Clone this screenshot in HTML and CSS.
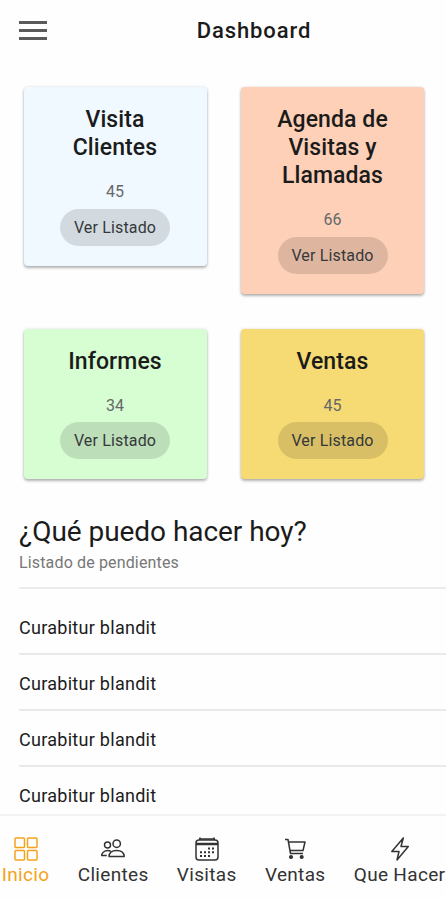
FILE: index.html
```
<!DOCTYPE html>
<html lang="es">
<head>
    <meta charset="UTF-8">
    <meta name="viewport" content="width=device-width, initial-scale=1.0">
    <title>Dashboard</title>
    <link rel="stylesheet" href="styles.css">
</head>
<body>
    <div class="app">
        <header class="toolbar">
            <button class="menu-btn" aria-label="Menú">
                <span></span>
                <span></span>
                <span></span>
            </button>
            <h1>Dashboard</h1>
        </header>

        <main class="content">
            <section class="cards">
                <div class="card blue">
                    <h2>Visita Clientes</h2>
                    <p>45</p>
                    <button class="chip">Ver Listado</button>
                </div>
                <div class="card orange">
                    <h2>Agenda de Visitas y Llamadas</h2>
                    <p>66</p>
                    <button class="chip">Ver Listado</button>
                </div>
                <div class="card green">
                    <h2>Informes</h2>
                    <p>34</p>
                    <button class="chip">Ver Listado</button>
                </div>
                <div class="card yellow">
                    <h2>Ventas</h2>
                    <p>45</p>
                    <button class="chip">Ver Listado</button>
                </div>
            </section>

            <section class="todo">
                <div class="todo-header">
                    <h2>¿Qué puedo hacer hoy?</h2>
                    <p>Listado de pendientes</p>
                </div>
                <ul class="todo-list">
                    <li>Curabitur blandit</li>
                    <li>Curabitur blandit</li>
                    <li>Curabitur blandit</li>
                    <li>Curabitur blandit</li>
                </ul>
            </section>
        </main>

        <nav class="tabs">
            <a class="tab active">
                <svg viewBox="0 0 24 24">
                    <rect x="1" y="1" width="9.5" height="9.5" rx="1"/>
                    <rect x="13.5" y="1" width="9.5" height="9.5" rx="1"/>
                    <rect x="1" y="13.5" width="9.5" height="9.5" rx="1"/>
                    <rect x="13.5" y="13.5" width="9.5" height="9.5" rx="1"/>
                </svg>
                <span>Inicio</span>
            </a>
            <a class="tab">
                <svg viewBox="0 0 24 24">
                    <circle cx="15.7" cy="6.7" r="3.7"/>
                    <path d="M8 19.5c.2-4 3.5-6 7.700-6s7.300 2 7.500 6z"/>
                    <circle cx="6.5" cy="8" r="3"/>
                    <path d="M9.800 14.200c-4-1.600-8.800.1-9.200 4.300h5.200"/>
                </svg>
                <span>Clientes</span>
            </a>
            <a class="tab">
                <svg viewBox="0 0 24 24">
                    <rect x="1" y="3" width="22" height="20" rx="3"/>
                    <path d="M5 .5V3M19 .5V3M4 2h16"/>
                    <path class="thick" d="M1 7h22"/>
                    <path class="dots" d="M13 11.500h2M17 11.500h2M5 15.300h2M9 15.300h2M13 15.300h2M17 15.300h2M5 19h2M9 19h2M13 19h2"/>
                </svg>
                <span>Visitas</span>
            </a>
            <a class="tab">
                <svg viewBox="0 0 24 24">
                    <path d="M2 2.500h3l2.500 14h12.500M5.500 5h16.500l-2 8.500H7"/>
                    <circle class="fill" cx="8" cy="20" r="1.300"/>
                    <circle class="fill" cx="18.700" cy="20" r="1.300"/>
                </svg>
                <span>Ventas</span>
            </a>
            <a class="tab">
                <svg viewBox="0 0 24 24">
                    <path d="M15.300 1L3.800 14.500H11L9 23L20.300 9.500H13z"/>
                </svg>
                <span>Que Hacer</span>
            </a>
        </nav>
    </div>
</body>
</html>
```
FILE: styles.css
```
* {
    box-sizing: border-box;
    margin: 0;
    padding: 0;
}
body {
    font-family: Roboto, sans-serif;
    background: #fefefe;
    color: #1b1b1b;
}
button {
    border: none;
    background: none;
    font: inherit;
    cursor: pointer;
}
.app {
    display: flex;
    flex-direction: column;
    height: 900px;
    overflow: hidden;
}
.toolbar {
    display: grid;
    grid-template-columns: 62px 1fr;
    align-items: center;
    height: 61px;
    flex-shrink: 0;
    padding-left: 19px;
}
.menu-btn {
    display: flex;
    flex-direction: column;
    gap: 5px;
    width: 28px;
}
.menu-btn span {
    height: 3px;
    background: #5a5a5a;
}
.toolbar h1 {
    padding-right: 19px;
    text-align: center;
    font-size: 22px;
    font-weight: 500;
    letter-spacing: 0.9px;
}
.content {
    flex: 1;
    min-height: 0;
    overflow: hidden;
}
.cards {
    display: grid;
    grid-template-columns: 183px 183px;
    gap: 35px 34.5px;
    align-items: start;
    padding: 26px 0 0 23.5px;
}
.card {
    display: flex;
    flex-direction: column;
    align-items: center;
    padding: 19px 28px 20px;
    border-radius: 4px;
    box-shadow: 0 2px 3px rgba(0,0,0,0.28), 0 0 3px rgba(0,0,0,0.12);
    text-align: center;
}
.blue { background: #f0f9ff; }
.orange { background: #fdd0b7; }
.green { background: #d7fdd3; }
.yellow { background: #f6da73; }
.card h2 {
    font-size: 23px;
    font-weight: 500;
    line-height: 28px;
    letter-spacing: 0.1px;
}
.card p {
    margin: 21px 0 7.5px;
    font-size: 16px;
    line-height: 18px;
    letter-spacing: 0.1px;
    color: #65686a;
}
.chip {
    width: 110px;
    height: 37px;
    border-radius: 19px;
    background: rgba(0,0,0,0.12);
    font-size: 16px;
    letter-spacing: 0.15px;
    color: #35383a;
}
.todo {
    padding: 35px 0 0 19px;
}
.todo-header {
    height: 75px;
    border-bottom: 2px solid #ececec;
}
.todo-header h2 {
    font-size: 28px;
    font-weight: 400;
    line-height: 36px;
    letter-spacing: -0.05px;
}
.todo-header p {
    font-size: 16px;
    line-height: 26px;
    letter-spacing: 0.15px;
    color: #777;
}
.todo-list {
    list-style: none;
    padding-top: 10px;
}
.todo-list li {
    height: 56px;
    border-bottom: 2px solid #e9e9e9;
    font-size: 18px;
    line-height: 57px;
    letter-spacing: 0.28px;
}
.tabs {
    display: flex;
    gap: 28.3px;
    height: 86px;
    flex-shrink: 0;
    padding: 21px 0 0 1.8px;
    border-top: 2px solid #f2f2f2;
}
.tab {
    display: flex;
    flex-direction: column;
    align-items: center;
    flex-shrink: 0;
    gap: 2px;
    font-size: 19px;
    line-height: 24px;
    letter-spacing: 0.32px;
    color: #333;
}
.tab.active {
    color: #f5a21b;
}
.tab svg {
    width: 24px;
    height: 24px;
    fill: none;
    stroke: currentColor;
    stroke-width: 1.5;
    stroke-linejoin: round;
}
.tab .thick {
    stroke-width: 2.5;
}
.tab .dots {
    stroke-width: 2;
}
.tab .fill {
    fill: currentColor;
}
```
